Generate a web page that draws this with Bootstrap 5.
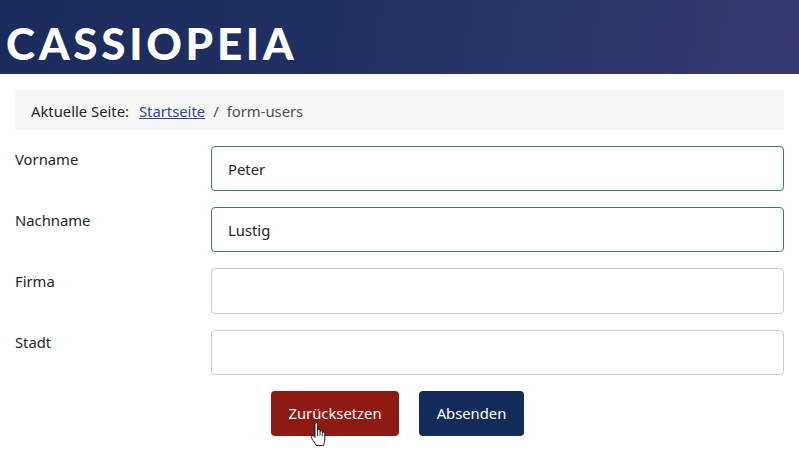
<!DOCTYPE html>
<html lang="de">
<head>
<meta charset="utf-8">
<title>form-users</title>
<link href="https://cdn.jsdelivr.net/npm/bootstrap@5.3.0/dist/css/bootstrap.min.css" rel="stylesheet">
<style>
body{font-family:"Noto Sans","Open Sans",sans-serif;font-size:14.8px;color:#22262a;background:#fff}
.site-head{height:74px;background:linear-gradient(100deg,#1a2b5c 0%,#213062 40%,#373a72 100%)}
.site-logo{font-family:"Lato",sans-serif;font-weight:900;font-size:44px;letter-spacing:3.7px;line-height:1;color:#fff;padding-left:6px;padding-top:21px}
.page-body{padding:16px 15px 21px}
.crumbs{height:40px;background:#f6f6f6;padding-left:16px;padding-top:3px;margin-bottom:16px}
.crumbs a{color:#2a4a94}
.crumbs .crumb-sep{color:#495057;margin:0 8px}
.crumbs .crumb-now{color:#495057}
.crumb-lead{margin-right:10px}
.field-row{margin-bottom:16px}
.field-label{width:196px;flex:none;margin:0;padding-top:3px;line-height:20px}
.field-label.is-high{padding-top:2px}
.field-input{height:45px;border-radius:4px;border:1px solid #cdcdcd;padding:0 16px;font-size:14.8px;color:#22262a;box-shadow:none}
.field-input.is-good{border-color:#457d54}
.field-input.is-tall{height:46px}
.btn-row{padding-left:256px;gap:20px}
.act-btn{height:45px;border-radius:4px;font-size:14.8px;color:#fff;border:0;padding:0 17px}
.act-reset{background:#8f1a14;width:128px}
.act-send{background:#132b58;width:105px}
.act-btn:hover{color:#fff}
.hand{position:absolute;left:39px;top:30px;width:17px;height:26px;z-index:5;pointer-events:none}
</style>
</head>
<body>
<header class="site-head"><div class="site-logo">CASSIOPEIA</div></header>
<main class="page-body">
  <nav class="crumbs d-flex align-items-center" aria-label="breadcrumb">
    <span class="crumb-lead">Aktuelle Seite:</span>
    <a href="#">Startseite</a><span class="crumb-sep">/</span><span class="crumb-now">form-users</span>
  </nav>
  <form>
    <div class="field-row d-flex"><label class="field-label" for="f1">Vorname</label><input id="f1" class="form-control field-input is-good" value="Peter"></div>
    <div class="field-row d-flex"><label class="field-label" for="f2">Nachname</label><input id="f2" class="form-control field-input is-good" value="Lustig"></div>
    <div class="field-row d-flex"><label class="field-label" for="f3">Firma</label><input id="f3" class="form-control field-input is-tall"></div>
    <div class="field-row d-flex"><label class="field-label is-high" for="f4">Stadt</label><input id="f4" class="form-control field-input"></div>
    <div class="btn-row d-flex">
      <div class="position-relative">
        <button type="button" class="btn act-btn act-reset">Zurücksetzen</button>
        <svg class="hand" viewBox="0 0 17 26" aria-hidden="true"><path d="M5 14V3.2C5 1.2 7.6 1.2 7.6 3.2V10.5V9.4C7.6 7.8 10 7.8 10 9.4V10.8C10 9.4 12.3 9.4 12.3 10.9V12C12.3 10.8 14.8 10.8 14.8 12.4V18C14.8 21 14 22 13.5 24.6H6.2C5.6 22.4 3.2 20 1.6 17.4C0.4 15.4 2.6 13.6 4.2 15.4L5 16.4Z" fill="#fff" stroke="#1b1b1b" stroke-width="1" stroke-linejoin="round"/><path d="M7.6 10.5V15M10 10.8V15M12.3 12V15" stroke="#1b1b1b" stroke-width=".9" fill="none"/></svg>
      </div>
      <button type="button" class="btn act-btn act-send">Absenden</button>
    </div>
  </form>
</main>
<script src="https://cdn.jsdelivr.net/npm/bootstrap@5.3.0/dist/js/bootstrap.bundle.min.js"></script>
</body>
</html>
